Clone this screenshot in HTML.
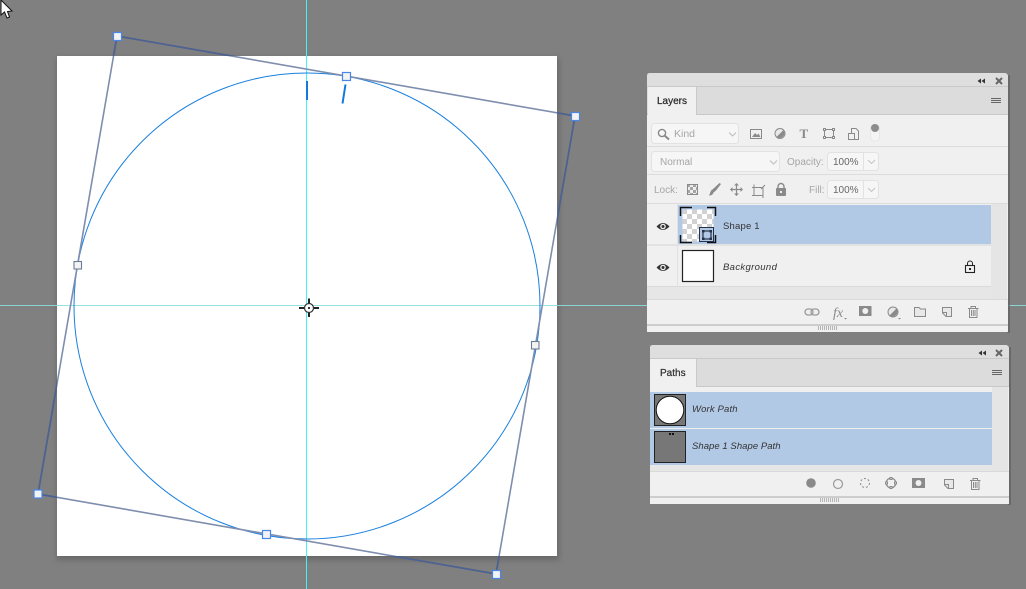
<!DOCTYPE html>
<html><head><meta charset="utf-8"><style>
html,body{margin:0;padding:0;background:#808080;width:1026px;height:589px;overflow:hidden}
svg{display:block;position:absolute;left:0;top:0}
text{font-family:"Liberation Sans",sans-serif;font-size:10px}
</style></head><body>
<svg width="1026" height="589" viewBox="0 0 1026 589" xmlns="http://www.w3.org/2000/svg">
<defs>
<filter id="sh" x="-5%" y="-5%" width="110%" height="110%"><feGaussianBlur stdDeviation="3"/></filter>
<pattern id="chk" width="10" height="10" patternUnits="userSpaceOnUse" x="682" y="209"><rect width="10" height="10" fill="#fff"/><rect width="5" height="5" fill="#d2d2d2"/><rect x="5" y="5" width="5" height="5" fill="#d2d2d2"/></pattern>
<pattern id="chk2" width="6" height="6" patternUnits="userSpaceOnUse" x="687" y="184"><rect width="6" height="6" fill="#eee"/><rect width="3" height="3" fill="#a5a5a5"/><rect x="3" y="3" width="3" height="3" fill="#a5a5a5"/></pattern>
<clipPath id="inC"><rect x="57" y="56" width="500" height="500"/></clipPath>
<clipPath id="outC"><path clip-rule="evenodd" d="M0 0H1026V589H0ZM57 56V556H557V56Z"/></clipPath>
</defs>
<rect width="1026" height="589" fill="#808080"/>
<rect x="57" y="58" width="502" height="502" fill="#555" opacity=".55" filter="url(#sh)"/>
<rect x="57" y="56" width="500" height="500" fill="#fff"/>
<!-- guides -->
<rect x="0" y="305" width="1026" height="1" fill="#63e6e6" opacity=".85"/>
<rect x="0" y="305" width="1026" height="1" fill="#cfcfcf" opacity=".35"/>
<rect x="306" y="0" width="1" height="589" fill="#3ff4f4"/>
<!-- circle -->
<circle cx="307" cy="306" r="233" fill="none" stroke="#1a80de" stroke-width="1"/>
<!-- bbox -->
<polygon clip-path="url(#inC)" points="117,36 575,116 496,574 38,494" fill="none" stroke="#7f8eae" stroke-width="1.6"/>
<polygon clip-path="url(#outC)" points="117,36 575,116 496,574 38,494" fill="none" stroke="#4d6291" stroke-width="1.8"/>
<!-- ticks -->
<rect x="306" y="81" width="2" height="19" fill="#1479dc"/>
<path d="M345.5 84.5 L342.5 103.5" stroke="#1479dc" stroke-width="2" fill="none"/>
<!-- handles -->
<g fill="#f3f3f3" stroke="#4a86e8" stroke-width="1.2">
<rect x="113.500" y="32.500" width="8" height="8"/>
<rect x="571.500" y="112.500" width="8" height="8"/>
<rect x="492.500" y="570.500" width="8" height="8"/>
<rect x="34" y="490" width="8" height="8"/>
<rect x="342.500" y="72.500" width="8" height="8"/>
<rect x="262.500" y="530.500" width="8" height="8"/>
</g>
<g fill="#f3f3f3" stroke="#6d7d95" stroke-width="1.1">
<rect x="74" y="261.500" width="7.500" height="7.500"/>
<rect x="531.500" y="341.500" width="7.500" height="7.500"/>
</g>
<!-- crosshair -->
<g stroke="#222" stroke-width="2" fill="none">
<path d="M309 298.500V303M309 312.500V317M299 308H304M314 308H319"/>
</g>
<circle cx="309" cy="308" r="4.500" fill="#fff" stroke="#333" stroke-width="1.200"/>
<rect x="308" y="307" width="2" height="2" fill="#333"/>
<!-- cursor -->
<path d="M1 0 L1 15 L4.500 12 L7 18 L9.500 17 L7.500 11.500 L12 11 Z" fill="#fff" stroke="#111" stroke-width="1"/>

<!-- ===== LAYERS PANEL ===== -->
<rect x="1007" y="75" width="3" height="258" fill="#5f5f5f" opacity=".7"/>
<path d="M647 76 Q647 73 650 73 H1004 Q1008 73 1008 77 V332 H647 Z" fill="#f0f0f0"/>
<path d="M647 76 Q647 73 650 73 H1004 Q1008 73 1008 77 V86 H647 Z" fill="#dedede"/>
<rect x="647" y="86" width="361" height="1" fill="#c9c9c9"/>
<rect x="647" y="87" width="361" height="27" fill="#dcdcdc"/>
<rect x="647" y="114" width="361" height="1" fill="#c9c9c9"/>
<rect x="648" y="87" width="48" height="28" fill="#f0f0f0"/>
<rect x="696" y="87" width="1" height="27" fill="#c9c9c9"/>
<text x="657" y="104" fill="#2b2b2b" stroke="#2b2b2b" stroke-width=".25" style="font-size:10px">Layers</text>
<!-- header controls -->
<path d="M981 78.500V83.500L977.500 81ZM985 78.500V83.500L981.500 81Z" fill="#333"/>
<path d="M996 78L1002 84M1002 78L996 84" stroke="#666" stroke-width="2"/>
<path d="M991 98.500H1001M991 100.500H1001M991 102.500H1001" stroke="#666" stroke-width="1"/>
<!-- row separators -->
<rect x="647" y="146" width="361" height="1" fill="#dcdcdc"/>
<rect x="647" y="174" width="361" height="1" fill="#dcdcdc"/>
<rect x="647" y="203" width="361" height="1" fill="#dcdcdc"/>
<!-- filter row -->
<rect x="651.500" y="123.500" width="87" height="20" rx="3" fill="#f6f6f6" stroke="#e2e2e2"/>
<circle cx="662" cy="133" r="3.600" fill="none" stroke="#888" stroke-width="1.400"/>
<path d="M664.500 135.500L669 139.500" stroke="#888" stroke-width="2"/>
<text x="674" y="137" fill="#a6a6a6" style="font-size:10.500px">Kind</text>
<path d="M729 132.500L732.500 136L736 132.500" fill="none" stroke="#bdbdbd"/>
<rect x="750.500" y="129.500" width="11" height="9" fill="none" stroke="#8a8a8a"/>
<path d="M752 137L755 133L757 135L758.500 133.500L760.500 137Z" fill="#8a8a8a"/>
<circle cx="780" cy="133.500" r="5" fill="#e8e8e8" stroke="#8a8a8a"/>
<path d="M783.500 130A5 5 0 0 1 776.500 137Z" fill="#8a8a8a"/>
<text x="799.500" y="138" fill="#8a8a8a" font-weight="bold" style="font-family:'Liberation Serif',serif;font-size:13px">T</text>
<rect x="824.500" y="129.500" width="9" height="8" fill="none" stroke="#8a8a8a"/>
<g fill="#f0f0f0" stroke="#8a8a8a"><rect x="823.500" y="128.500" width="2" height="2"/><rect x="832.500" y="128.500" width="2" height="2"/><rect x="823.500" y="136.500" width="2" height="2"/><rect x="832.500" y="136.500" width="2" height="2"/></g>
<path d="M851.500 128.500H856L858.500 131V139.500H851.500Z" fill="none" stroke="#8a8a8a"/>
<rect x="848.500" y="133.500" width="6" height="6" fill="#f0f0f0" stroke="#8a8a8a"/>
<rect x="870.500" y="124.500" width="9" height="17" rx="4.500" fill="#f4f4f4" stroke="#e6e6e6"/>
<circle cx="875" cy="128" r="4" fill="#8c8c8c"/>
<!-- blend row -->
<rect x="651.500" y="151.500" width="128" height="20" rx="3" fill="#f6f6f6" stroke="#e2e2e2"/>
<text x="660" y="165" fill="#a6a6a6" style="font-size:10px">Normal</text>
<path d="M770 160.500L773.500 164L777 160.500" fill="none" stroke="#bdbdbd"/>
<text x="787" y="165" fill="#a6a6a6" style="font-size:10px">Opacity:</text>
<rect x="827.500" y="152.500" width="51" height="18" rx="3" fill="#f6f6f6" stroke="#e2e2e2"/>
<rect x="863" y="153" width="1" height="17" fill="#e2e2e2"/>
<text x="833" y="165" fill="#666" style="font-size:10px">100%</text>
<path d="M868 160L871.500 163.500L875 160" fill="none" stroke="#c4c4c4"/>
<!-- lock row -->
<text x="654" y="193" fill="#a6a6a6" style="font-size:10px">Lock:</text>
<rect x="687.500" y="184.500" width="10" height="10" fill="url(#chk2)" stroke="#8a8a8a"/>
<path d="M709 195.500C711 195.500 713 195 713.500 192.500L716 190.500L721 184L719.500 183L712.500 189.500C710.500 190 710.500 193 709 195.500Z" fill="#8a8a8a"/>
<path d="M736.500 184V195M731 189.500H742" stroke="#8a8a8a" stroke-width="1.200"/>
<path d="M736.500 183L734 185.500H739ZM736.500 196L734 193.500H739ZM730 189.500L732.500 187V192ZM743 189.500L740.500 187V192Z" fill="#8a8a8a"/>
<path d="M754 187.500H763V196M754 187.500V195.500H763M752 187.500H754M754 184.500V187M765 185L761 189M763 196V198M752 195.500H754" fill="none" stroke="#8a8a8a"/>
<rect x="776" y="188" width="10" height="8" rx="1" fill="#8a8a8a"/>
<path d="M778 188.500V186.500A3 3 0 0 1 784 186.500V188.500" fill="none" stroke="#8a8a8a" stroke-width="1.400"/>
<rect x="780" y="191" width="2" height="2" fill="#f0f0f0"/>
<text x="809" y="193" fill="#a6a6a6" style="font-size:10px">Fill:</text>
<rect x="827.500" y="180.500" width="51" height="18" rx="3" fill="#f6f6f6" stroke="#e2e2e2"/>
<rect x="863" y="181" width="1" height="17" fill="#e2e2e2"/>
<text x="833" y="193" fill="#666" style="font-size:10px">100%</text>
<path d="M868 188L871.500 191.500L875 188" fill="none" stroke="#c4c4c4"/>
<!-- list -->
<rect x="991" y="204" width="16" height="95" fill="#e5e5e5"/>
<rect x="647" y="286" width="344" height="13" fill="#e6e6e6"/>
<rect x="647" y="286" width="344" height="1" fill="#dadada"/>
<rect x="647" y="299" width="361" height="1" fill="#dadada"/>
<rect x="678" y="205" width="313" height="39" fill="#b2c9e6"/>
<rect x="647" y="244" width="344" height="2" fill="#e2e2e2"/>
<rect x="677" y="204" width="1" height="82" fill="#e2e2e2"/>
<!-- eyes -->
<path d="M656.500 226.500Q663 219.500 669.500 226.500Q663 233.500 656.500 226.500Z" fill="#333"/><circle cx="663" cy="226.500" r="2.800" fill="#f0f0f0"/><circle cx="663" cy="226.500" r="1.500" fill="#333"/>
<path d="M656.500 267.500Q663 260.500 669.500 267.500Q663 274.500 656.500 267.500Z" fill="#333"/><circle cx="663" cy="267.500" r="2.800" fill="#f0f0f0"/><circle cx="663" cy="267.500" r="1.500" fill="#333"/>
<!-- shape thumb -->
<rect x="682.500" y="209.500" width="31" height="32" fill="url(#chk)"/>
<path d="M680.500 216V207.500H692M707 207.500H715.500V216M715.500 235V242.500H707M692 242.500H680.500V235" fill="none" stroke="#111" stroke-width="1.500"/>
<rect x="699.500" y="227.500" width="14" height="14" fill="#b2c9e6" stroke="#26324a"/>
<rect x="703" y="231" width="8" height="8" fill="none" stroke="#26324a" stroke-width="1.200"/>
<g fill="#26324a"><rect x="702" y="230" width="2.500" height="2.500"/><rect x="709.500" y="230" width="2.500" height="2.500"/><rect x="702" y="237.500" width="2.500" height="2.500"/><rect x="709.500" y="237.500" width="2.500" height="2.500"/></g>
<text x="723" y="229" fill="#333" style="font-size:9.500px;letter-spacing:.2px">Shape 1</text>
<rect x="682.500" y="250.500" width="31" height="31" fill="#fff" stroke="#222" stroke-width="1.200"/>
<text x="723" y="270" fill="#333" font-style="italic" style="font-size:9.500px;letter-spacing:.35px">Background</text>
<rect x="965.500" y="265.500" width="9" height="7" fill="none" stroke="#222" stroke-width="1.100"/>
<path d="M967.500 265.500V263.500A2.500 2.500 0 0 1 972.500 263.500V265.500" fill="none" stroke="#222"/>
<rect x="969" y="268" width="2" height="2" fill="#222"/>
<!-- footer -->
<g fill="none" stroke="#9a9a9a" stroke-width="1.300">
<rect x="805" y="309" width="8" height="6" rx="3"/><rect x="811" y="309" width="8" height="6" rx="3"/>
</g>
<text x="833" y="317" fill="#8a8a8a" font-style="italic" style="font-family:'Liberation Serif',serif;font-size:14px">fx</text>
<path d="M844 318H847L845.500 319.500Z" fill="#8a8a8a"/>
<rect x="859" y="306" width="12.500" height="10" fill="#8a8a8a"/><circle cx="865.300" cy="311" r="3" fill="#f0f0f0"/>
<circle cx="893" cy="312" r="5" fill="#e8e8e8" stroke="#8a8a8a"/><path d="M896.500 308.500A5 5 0 0 1 889.500 315.500Z" fill="#8a8a8a"/>
<path d="M898 318H901L899.500 319.500Z" fill="#8a8a8a"/>
<path d="M914.500 307.500H919L920.500 309H925.500V316.500H914.500Z" fill="#e8e8e8" stroke="#8a8a8a"/>
<path d="M942.500 307.500H951.500V316.500H946L942.500 313Z" fill="#e8e8e8" stroke="#8a8a8a"/><path d="M942.500 312.500H946.500V316.500" fill="none" stroke="#8a8a8a"/>
<g fill="none" stroke="#8a8a8a"><path d="M968 308.500H978.500M971 308.500V306.500H975.500V308.500M969.500 308.500V317.500H977V308.500M971.500 310V316M973.300 310V316M975 310V316"/></g>
<rect x="647" y="324" width="361" height="2" fill="#cdcdcd"/>
<g fill="#b5b5b5"><rect x="818" y="326" width="1" height="4"/><rect x="820" y="326" width="1" height="4"/><rect x="822" y="326" width="1" height="4"/><rect x="824" y="326" width="1" height="4"/><rect x="826" y="326" width="1" height="4"/><rect x="828" y="326" width="1" height="4"/><rect x="830" y="326" width="1" height="4"/><rect x="832" y="326" width="1" height="4"/><rect x="834" y="326" width="1" height="4"/><rect x="836" y="326" width="1" height="4"/></g>

<!-- ===== PATHS PANEL ===== -->
<rect x="1008" y="347" width="3" height="158" fill="#5f5f5f" opacity=".7"/>
<path d="M650 348 Q650 345 653 345 H1005 Q1009 345 1009 349 V504 H650 Z" fill="#f0f0f0"/>
<path d="M650 348 Q650 345 653 345 H1005 Q1009 345 1009 349 V358 H650 Z" fill="#dedede"/>
<rect x="650" y="358" width="359" height="1" fill="#c9c9c9"/>
<rect x="650" y="359" width="359" height="27" fill="#dcdcdc"/>
<rect x="650" y="386" width="359" height="1" fill="#c9c9c9"/>
<rect x="650" y="359" width="46" height="28" fill="#f0f0f0"/>
<rect x="696" y="359" width="1" height="27" fill="#c9c9c9"/>
<text x="660" y="376" fill="#333" stroke="#333" stroke-width=".25" style="font-size:10px">Paths</text>
<path d="M982 350.500V355.500L978.500 353ZM986 350.500V355.500L982.500 353Z" fill="#333"/>
<path d="M996 350L1002 356M1002 350L996 356" stroke="#666" stroke-width="2"/>
<path d="M992 370.500H1002M992 372.500H1002M992 374.500H1002" stroke="#666" stroke-width="1"/>
<rect x="992" y="387" width="16" height="84" fill="#e5e5e5"/>
<rect x="650" y="465" width="342" height="6" fill="#e6e6e6"/>
<rect x="650" y="471" width="359" height="1" fill="#dadada"/>
<rect x="650" y="392" width="342" height="36" fill="#b2c9e6"/>
<rect x="650" y="429" width="342" height="36" fill="#b2c9e6"/>
<rect x="654.500" y="394.500" width="31" height="31" fill="#777" stroke="#222"/>
<circle cx="670" cy="410" r="13.800" fill="#fff" stroke="#111" stroke-width="1"/>
<rect x="654.500" y="431.500" width="31" height="31" fill="#777" stroke="#222"/>
<rect x="669" y="433" width="2" height="2" fill="#111"/><rect x="672" y="433" width="2" height="2" fill="#111"/>
<text x="692" y="412" fill="#333" font-style="italic" style="font-size:9.500px;letter-spacing:.15px">Work Path</text>
<text x="692" y="449" fill="#333" font-style="italic" style="font-size:9.500px;letter-spacing:.05px">Shape 1 Shape Path</text>
<circle cx="811" cy="483" r="4.800" fill="#8a8a8a"/>
<circle cx="838" cy="484" r="4.500" fill="none" stroke="#9a9a9a" stroke-width="1.200"/>
<circle cx="865" cy="483" r="4.500" fill="none" stroke="#8a8a8a" stroke-dasharray="2 2"/>
<circle cx="891" cy="483" r="4.800" fill="none" stroke="#8a8a8a" stroke-width="1.200"/>
<g fill="#f0f0f0" stroke="#8a8a8a"><rect x="885.500" y="482" width="2" height="2"/><rect x="894.500" y="482" width="2" height="2"/><rect x="890" y="477.500" width="2" height="2"/><rect x="890" y="486.500" width="2" height="2"/></g>
<rect x="912" y="478" width="13" height="10" fill="#8a8a8a"/><circle cx="918.500" cy="483" r="3" fill="#f0f0f0"/>
<path d="M944.500 479.500H953.500V488.500H948L944.500 485Z" fill="#e8e8e8" stroke="#8a8a8a"/><path d="M944.500 484.500H948.500V488.500" fill="none" stroke="#8a8a8a"/>
<g fill="none" stroke="#8a8a8a"><path d="M970 480.500H980.500M973 480.500V478.500H977.500V480.500M971.500 480.500V489.500H979V480.500M973.500 482V488M975.300 482V488M977 482V488"/></g>
<rect x="650" y="496" width="359" height="2" fill="#cdcdcd"/>
<g fill="#b5b5b5"><rect x="820" y="498" width="1" height="4"/><rect x="822" y="498" width="1" height="4"/><rect x="824" y="498" width="1" height="4"/><rect x="826" y="498" width="1" height="4"/><rect x="828" y="498" width="1" height="4"/><rect x="830" y="498" width="1" height="4"/><rect x="832" y="498" width="1" height="4"/><rect x="834" y="498" width="1" height="4"/><rect x="836" y="498" width="1" height="4"/><rect x="838" y="498" width="1" height="4"/></g>
</svg>
</body></html>
